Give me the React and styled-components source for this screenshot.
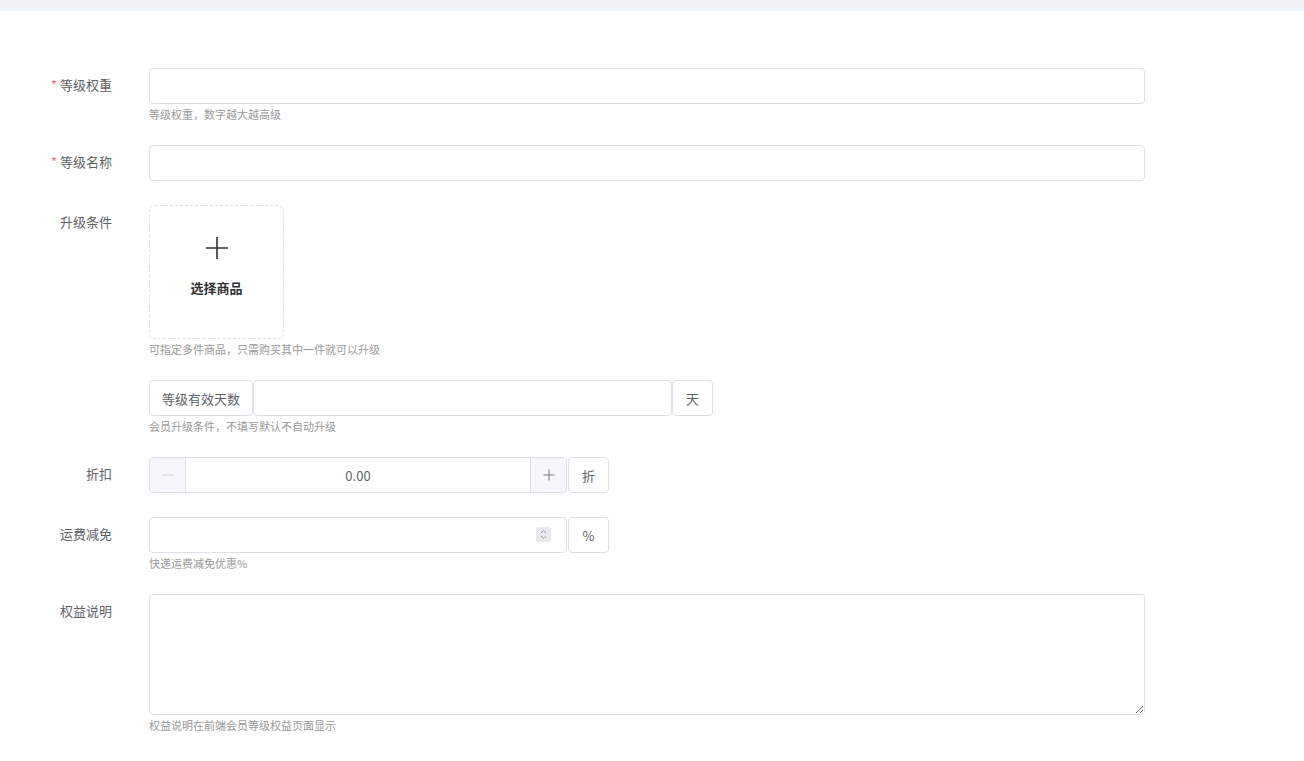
import React from 'react';
import styled, { createGlobalStyle } from 'styled-components';

const GlobalStyle = createGlobalStyle`
  body {
    margin: 0;
    background: #fff;
    font-family: "Noto Sans CJK SC", "Noto Sans", sans-serif;
    color: #606266;
  }
  * { box-sizing: border-box; }
`;

const TopBar = styled.div`
  height: 11px;
  background: #eff2f6;
`;

const Form = styled.form`
  padding: 57px 0 0 0;
  width: 1145px;
`;

const Item = styled.div`
  display: flex;
  align-items: flex-start;
  margin-bottom: ${(p) => (p.$tight ? '0' : '24px')};
`;

const Label = styled.label`
  width: 112px;
  margin-right: 37px;
  flex: none;
  text-align: right;
  font-size: 13px;
  line-height: 34px;
  color: #606266;
  white-space: nowrap;
`;

const Star = styled.span`
  color: #f56c6c;
  margin-right: 3px;
`;

const Control = styled.div`
  flex: 1;
  min-width: 0;
  display: flex;
  flex-direction: column;
`;

const TextInput = styled.input`
  width: ${(p) => p.$w || '100%'};
  height: 36px;
  border: 1px solid #dcdfe6;
  border-radius: 4px;
  padding: 0 12px;
  font-size: 13px;
  color: #606266;
  font-family: inherit;
  outline: none;
  background: #fff;
  flex: none;
`;

const Hint = styled.div`
  font-size: 11px;
  line-height: 15px;
  padding-top: 3px;
  height: 17px;
  color: #999;
  white-space: nowrap;
`;

const Upload = styled.div`
  width: 135px;
  height: 134px;
  border: 1px dashed #dcdfe6;
  border-radius: 6px;
  display: flex;
  flex-direction: column;
  align-items: center;
  padding-top: 30px;
  gap: 19px;
  color: #303133;
`;

const UploadText = styled.div`
  font-size: 13px;
  line-height: 18px;
  font-weight: 700;
  color: #303133;
`;

const Group = styled.div`
  display: flex;
  align-items: stretch;
  gap: ${(p) => p.$gap ?? 1}px;
  height: 36px;
`;

const Addon = styled.div`
  height: 36px;
  border: 1px solid #dcdfe6;
  border-radius: 4px;
  display: flex;
  align-items: center;
  justify-content: center;
  font-size: 13px;
  color: #606266;
  background: #fff;
  flex: none;
  white-space: nowrap;
  width: ${(p) => p.$w}px;
`;

const Stepper = styled.div`
  width: 418px;
  height: 36px;
  border: 1px solid #dcdfe6;
  border-radius: 4px;
  display: flex;
  overflow: hidden;
`;

const StepBtn = styled.div`
  width: 36px;
  flex: none;
  background: #f5f7fa;
  display: flex;
  align-items: center;
  justify-content: center;
  color: ${(p) => (p.$disabled ? '#c0c4cc' : '#606266')};
  border-${(p) => (p.$side === 'left' ? 'right' : 'left')}: 1px solid #dcdfe6;
`;

const StepValue = styled.div`
  flex: 1;
  display: flex;
  align-items: center;
  justify-content: center;
  font-size: 13px;
  color: #606266;
`;

const NumberBox = styled.div`
  position: relative;
  width: 418px;
  height: 36px;
`;

const Spin = styled.div`
  position: absolute;
  right: 16px;
  top: 10px;
  width: 15px;
  height: 15px;
  background: #e9e9ed;
  border-radius: 2px;
  display: flex;
  align-items: center;
  justify-content: center;
`;

const TextArea = styled.textarea`
  width: 100%;
  height: 121px;
  border: 1px solid #dcdfe6;
  border-radius: 4px;
  padding: 6px 12px;
  font-size: 13px;
  font-family: inherit;
  color: #606266;
  outline: none;
  resize: vertical;
  display: block;
`;

const Plus = ({ size = 12 }) => (
  <svg width={size} height={size} viewBox="0 0 24 24" fill="none" stroke="currentColor" strokeWidth="1.6">
    <path d="M12 1v22M1 12h22" />
  </svg>
);

const Minus = () => (
  <svg width="12" height="12" viewBox="0 0 24 24" fill="none" stroke="currentColor" strokeWidth="1.6">
    <path d="M1 12h22" />
  </svg>
);

export default function App() {
  return (
    <>
      <GlobalStyle />
      <TopBar />
      <Form onSubmit={(e) => e.preventDefault()}>
        <Item>
          <Label><Star>*</Star>等级权重</Label>
          <Control>
            <TextInput />
            <Hint>等级权重，数字越大越高级</Hint>
          </Control>
        </Item>
        <Item>
          <Label><Star>*</Star>等级名称</Label>
          <Control>
            <TextInput />
          </Control>
        </Item>
        <Item>
          <Label>升级条件</Label>
          <Control>
            <Upload>
              <Plus size={24} />
              <UploadText>选择商品</UploadText>
            </Upload>
            <Hint>可指定多件商品，只需购买其中一件就可以升级</Hint>
          </Control>
        </Item>
        <Item>
          <Label />
          <Control>
            <Group $gap={0}>
              <Addon $w={104}>等级有效天数</Addon>
              <TextInput $w="419px" />
              <Addon $w={41}>天</Addon>
            </Group>
            <Hint>会员升级条件，不填写默认不自动升级</Hint>
          </Control>
        </Item>
        <Item>
          <Label>折扣</Label>
          <Control>
            <Group>
              <Stepper>
                <StepBtn $side="left" $disabled><Minus /></StepBtn>
                <StepValue>0.00</StepValue>
                <StepBtn $side="right"><Plus /></StepBtn>
              </Stepper>
              <Addon $w={41}>折</Addon>
            </Group>
          </Control>
        </Item>
        <Item>
          <Label>运费减免</Label>
          <Control>
            <Group>
              <NumberBox>
                <TextInput />
                <Spin>
                  <svg width="9" height="11" viewBox="0 0 9 11" fill="none" stroke="#9a9aa0" strokeWidth="1">
                    <path d="M2 4l2.5-2.5L7 4M2 7l2.5 2.5L7 7" />
                  </svg>
                </Spin>
              </NumberBox>
              <Addon $w={41}>%</Addon>
            </Group>
            <Hint>快递运费减免优惠%</Hint>
          </Control>
        </Item>
        <Item $tight>
          <Label>权益说明</Label>
          <Control>
            <TextArea />
            <Hint>权益说明在前端会员等级权益页面显示</Hint>
          </Control>
        </Item>
      </Form>
    </>
  );
}
